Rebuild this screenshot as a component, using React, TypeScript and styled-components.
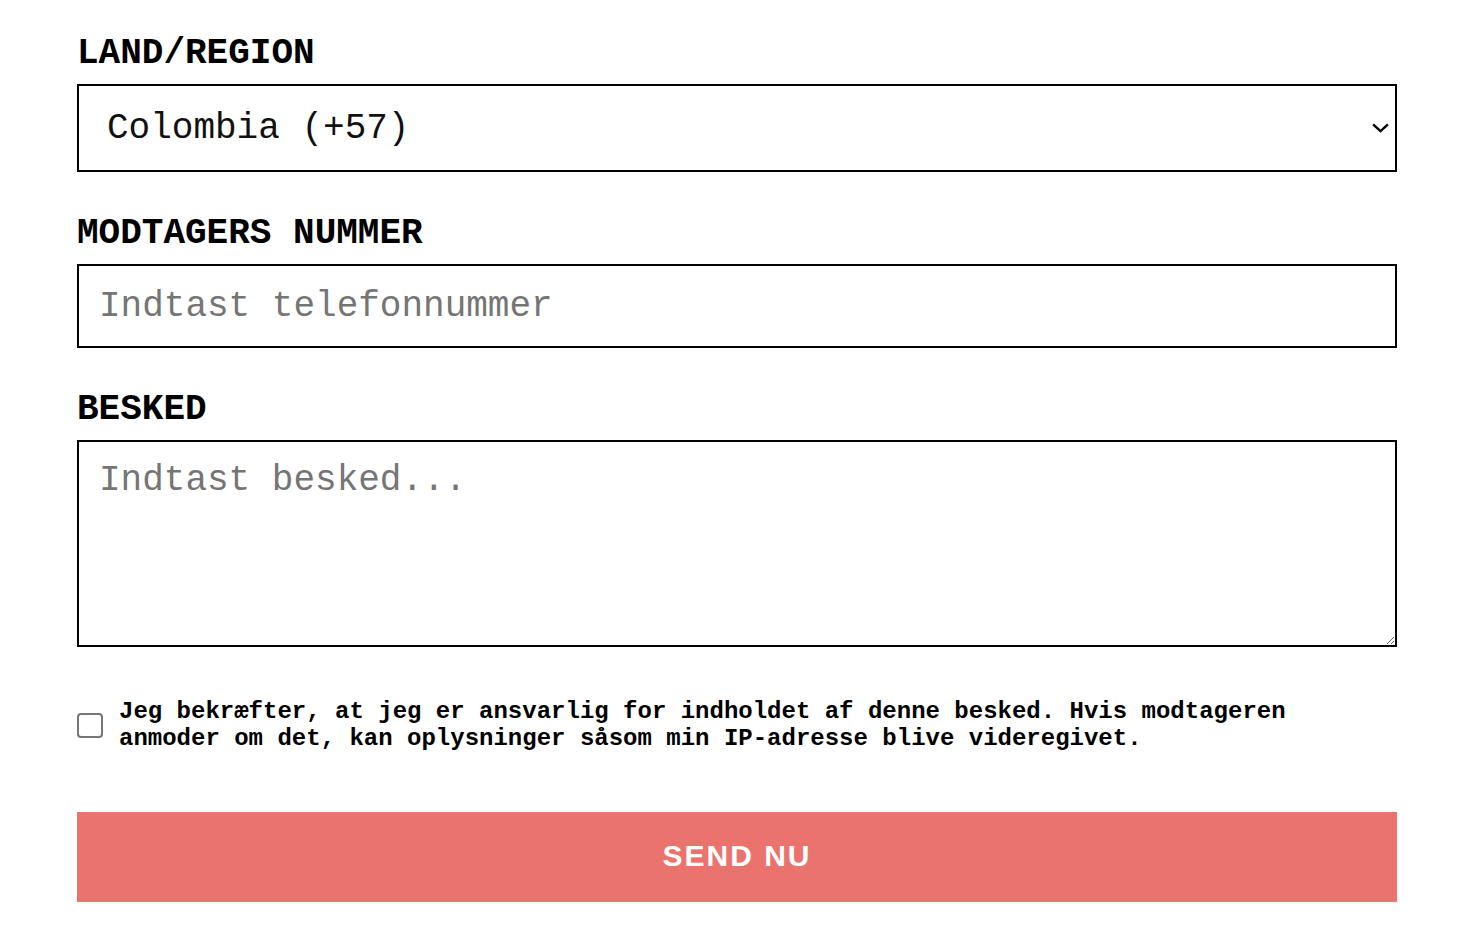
import React, { useState } from "react";

import styled, { createGlobalStyle } from "styled-components";

const GlobalStyle = createGlobalStyle`
  html,
  body {
    margin: 0;
    padding: 0;
    background: #ffffff;
  }

  * {
    box-sizing: border-box;
  }
`;

export default function App(): JSX.Element {
  const [country, setCountry] = useState("CO");
  const [phone, setPhone] = useState("");
  const [message, setMessage] = useState("");
  const [confirmed, setConfirmed] = useState(false);

  return (
    <>
      <GlobalStyle />
      <Form onSubmit={(e) => e.preventDefault()}>
        <Field>
          <Label htmlFor="country">LAND/REGION</Label>
          <SelectWrap>
            <Select
              id="country"
              value={country}
              onChange={(e) => setCountry(e.target.value)}
            >
              <option value="CO">Colombia (+57)</option>
              <option value="DK">Danmark (+45)</option>
              <option value="SE">Sverige (+46)</option>
            </Select>
            <Chevron viewBox="0 0 16 9" aria-hidden="true">
              <path d="M1 1 L8 7.5 L15 1" />
            </Chevron>
          </SelectWrap>
        </Field>

        <Field>
          <Label htmlFor="phone">MODTAGERS NUMMER</Label>
          <TextInput
            id="phone"
            type="tel"
            placeholder="Indtast telefonnummer"
            value={phone}
            onChange={(e) => setPhone(e.target.value)}
          />
        </Field>

        <Field>
          <Label htmlFor="message">BESKED</Label>
          <MessageArea
            id="message"
            placeholder="Indtast besked..."
            value={message}
            onChange={(e) => setMessage(e.target.value)}
          />
        </Field>

        <ConfirmRow>
          <Checkbox
            type="checkbox"
            id="confirm"
            checked={confirmed}
            onChange={() => setConfirmed(!confirmed)}
          />
          <ConfirmText htmlFor="confirm">
            Jeg bekræfter, at jeg er ansvarlig for indholdet af denne besked.
            Hvis modtageren anmoder om det, kan oplysninger såsom min
            IP-adresse blive videregivet.
          </ConfirmText>
        </ConfirmRow>

        <SubmitButton type="submit">SEND NU</SubmitButton>
      </Form>
    </>
  );
}

const Form = styled.form`
  display: flex;
  flex-direction: column;

  width: 1320px;
  margin: 0 0 0 77px;
  padding: 33px 0 28px;

  font-family: "Liberation Mono", "Courier New", monospace;
`;

const Field = styled.div`
  display: flex;
  flex-direction: column;

  margin-bottom: 41px;

  &:nth-child(3) {
    margin-bottom: 51px;
  }
`;

const Label = styled.label`
  margin-bottom: 10px;

  color: #000000;
  font-size: 36px;
  font-weight: 700;
  line-height: 41px;
`;

const SelectWrap = styled.div`
  position: relative;
`;

const Select = styled.select`
  display: block;

  width: 100%;
  height: 88px;
  padding: 0 50px 0 28px;
  border: 2px solid #000000;
  border-radius: 0;

  color: #111111;
  font-family: "Liberation Mono", "Courier New", monospace;
  font-size: 36px;

  background: #ffffff;
  appearance: none;
  outline: none;
`;

const Chevron = styled.svg`
  position: absolute;
  top: 39px;
  right: 8px;

  width: 17px;
  height: 10px;

  fill: none;
  stroke: #000000;
  stroke-width: 2.2;
  pointer-events: none;
`;

const fieldBox = `
  display: block;

  width: 100%;
  border: 2px solid #000000;
  border-radius: 0;

  color: #111111;
  font-family: "Liberation Mono", "Courier New", monospace;
  font-size: 36px;

  background: #ffffff;
  outline: none;

  &::placeholder {
    color: #757575;
  }
`;

const TextInput = styled.input`
  ${fieldBox}
  height: 84px;
  padding: 0 20px;
`;

const MessageArea = styled.textarea`
  ${fieldBox}
  height: 207px;
  padding: 18px 20px;
  line-height: normal;
  resize: vertical;
`;

const ConfirmRow = styled.div`
  display: flex;
  align-items: center;
  gap: 16px;

  margin-bottom: 60px;
`;

const Checkbox = styled.input`
  flex: none;

  width: 26px;
  height: 25px;
  margin: 0;
  border: 2px solid #767676;
  border-radius: 4px;

  background: #ffffff;
  appearance: none;
  cursor: pointer;

  &:checked {
    background: #000000;
    border-color: #000000;
  }
`;

const ConfirmText = styled.label`
  color: #000000;
  font-size: 24px;
  font-weight: 700;
  line-height: 27px;
`;

const SubmitButton = styled.button`
  width: 100%;
  height: 90px;
  padding: 0 0 2px;
  border: none;

  color: #ffffff;
  font-family: "Liberation Sans", Arial, sans-serif;
  font-size: 30px;
  font-weight: 700;
  letter-spacing: 2px;

  background: #eb736e;
  cursor: pointer;

  &:hover {
    background: #e4625d;
  }
`;
